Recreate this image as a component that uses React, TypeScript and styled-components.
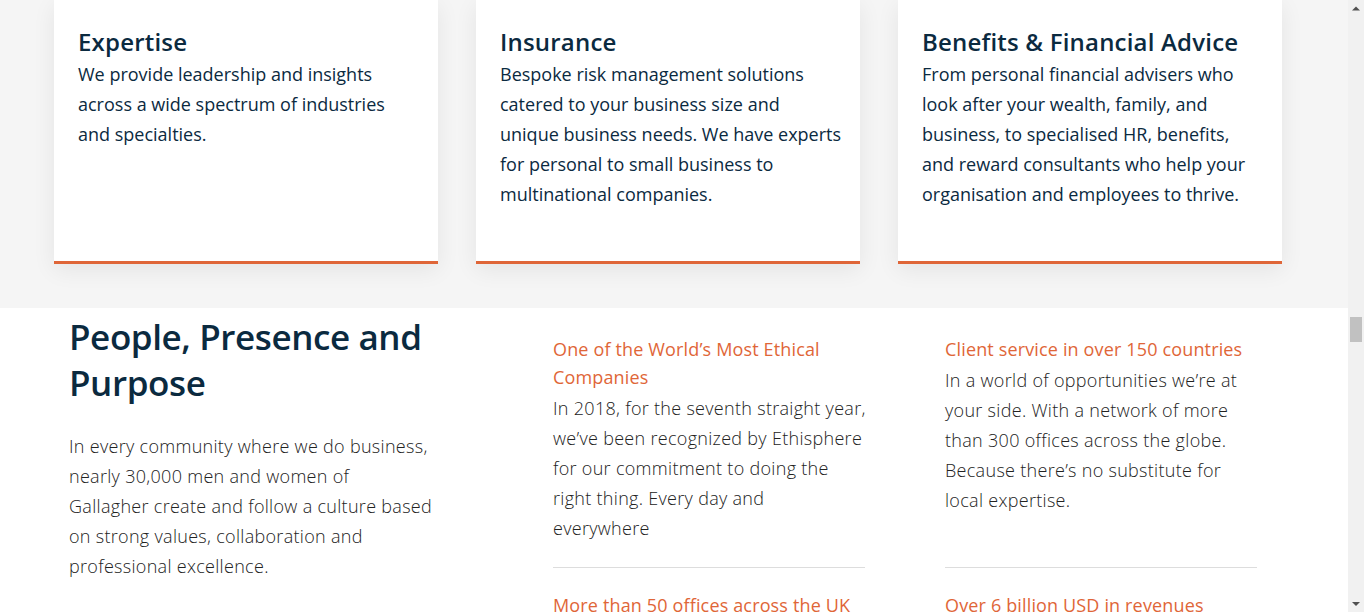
import React from 'react';
import styled, { createGlobalStyle } from 'styled-components';

const GlobalStyle = createGlobalStyle`
  html, body {
    margin: 0;
    padding: 0;
    overflow: hidden;
    background: #ffffff;
  }
  body {
    font-family: 'Open Sans', 'Liberation Sans', sans-serif;
  }
`;

const cards = [
  {
    title: 'Expertise',
    lines: ['We provide leadership and insights', 'across a wide spectrum of industries', 'and specialties.'],
  },
  {
    title: 'Insurance',
    lines: [
      'Bespoke risk management solutions',
      'catered to your business size and',
      'unique business needs. We have experts',
      'for personal to small business to',
      'multinational companies.',
    ],
  },
  {
    title: 'Benefits & Financial Advice',
    lines: [
      'From personal financial advisers who',
      'look after your wealth, family, and',
      'business, to specialised HR, benefits,',
      'and reward consultants who help your',
      'organisation and employees to thrive.',
    ],
  },
];

const stats = [
  {
    title: 'One of the World’s Most Ethical Companies',
    lines: [
      'In 2018, for the seventh straight year,',
      'we’ve been recognized by Ethisphere',
      'for our commitment to doing the',
      'right thing. Every day and',
      'everywhere',
    ],
  },
  {
    title: 'Client service in over 150 countries',
    lines: [
      'In a world of opportunities we’re at',
      'your side. With a network of more',
      'than 300 offices across the globe.',
      'Because there’s no substitute for',
      'local expertise.',
    ],
  },
  { title: 'More than 50 offices across the UK', lines: [] },
  { title: 'Over 6 billion USD in revenues', lines: [] },
];

const introLines = [
  'In every community where we do business,',
  'nearly 30,000 men and women of',
  'Gallagher create and follow a culture based',
  'on strong values, collaboration and',
  'professional excellence.',
];

function Lines({ lines }: { lines: string[] }) {
  return (
    <>
      {lines.map((l, i) => (
        <React.Fragment key={i}>
          {l}
          {i < lines.length - 1 && <br />}
        </React.Fragment>
      ))}
    </>
  );
}

export default function App() {
  return (
    <Viewport>
      <GlobalStyle />
      <Page>
        <CardsSection>
          <CardRow>
            {cards.map((c) => (
              <Card key={c.title}>
                <CardTitle>{c.title}</CardTitle>
                <CardText>
                  <Lines lines={c.lines} />
                </CardText>
              </Card>
            ))}
          </CardRow>
        </CardsSection>
        <AboutSection>
          <AboutGrid>
            <Intro>
              <Heading>People, Presence and Purpose</Heading>
              <IntroText>
                <Lines lines={introLines} />
              </IntroText>
            </Intro>
            {stats.map((s, i) => (
              <Stat key={s.title} $first={i < 2}>
                <StatTitle>{s.title}</StatTitle>
                {s.lines.length > 0 && (
                  <StatText>
                    <Lines lines={s.lines} />
                  </StatText>
                )}
              </Stat>
            ))}
          </AboutGrid>
        </AboutSection>
      </Page>
      <Scrollbar>
        <Arrow viewBox="0 0 16 16">
          <path d="M4 10.5 L8 6.5 L12 10.5 Z" fill="#505050" />
        </Arrow>
        <Track>
          <Thumb />
        </Track>
        <Arrow viewBox="0 0 16 16">
          <path d="M4 6 L8 10 L12 6 Z" fill="#505050" />
        </Arrow>
      </Scrollbar>
    </Viewport>
  );
}

const navy = '#0b2a3f';
const orange = '#df6638';

const Viewport = styled.div`
  display: flex;
  width: 1364px;
  height: 612px;
  overflow: hidden;
`;

const Page = styled.div`
  flex: 1;
  min-width: 0;
`;

const CardsSection = styled.section`
  background: #f5f5f5;
  height: 308px;
  padding: 0 66px 0 54px;
  box-sizing: border-box;
`;

const CardRow = styled.div`
  display: grid;
  grid-template-columns: repeat(3, 1fr);
  column-gap: 38px;
`;

const Card = styled.div`
  background: #ffffff;
  height: 264px;
  box-sizing: border-box;
  padding: 25px 12px 0 24px;
  border-bottom: 3px solid ${orange};
  box-shadow: 0 6px 22px rgba(0, 0, 0, 0.07);
`;

const CardTitle = styled.h3`
  margin: 0;
  font-size: 24px;
  line-height: 34px;
  font-weight: 600;
  color: ${navy};
  letter-spacing: 0.2px;
`;

const CardText = styled.p`
  margin: 0;
  font-size: 18px;
  line-height: 30px;
  font-weight: 400;
  color: ${navy};
  white-space: nowrap;
`;

const AboutSection = styled.section`
  padding: 8px 0 0 69px;
`;

const AboutGrid = styled.div`
  display: grid;
  grid-template-columns: 404px 312px 312px;
  column-gap: 80px;
`;

const Intro = styled.div`
  grid-row: span 2;
`;

const Heading = styled.h2`
  margin: -2px 0 25px;
  font-size: 35px;
  line-height: 46px;
  font-weight: 600;
  letter-spacing: -0.4px;
  color: ${navy};
`;

const IntroText = styled.p`
  margin: 0;
  font-size: 18px;
  line-height: 30px;
  font-weight: 300;
  letter-spacing: 0.3px;
  color: #222222;
`;

const Stat = styled.div<{ $first: boolean }>`
  padding: ${(p) => (p.$first ? '19px 0 24px' : '23px 0 0')};
  border-bottom: ${(p) => (p.$first ? '1px solid #dddddd' : 'none')};
`;

const StatTitle = styled.h4`
  margin: 0 0 2px;
  font-size: 18px;
  line-height: 28px;
  font-weight: 500;
  letter-spacing: 0.15px;
  color: ${orange};
`;

const StatText = styled.p`
  margin: 0;
  font-size: 18px;
  line-height: 30px;
  font-weight: 300;
  letter-spacing: 0.3px;
  color: #222222;
  white-space: nowrap;
`;

const Scrollbar = styled.div`
  width: 16px;
  background: #f1f1f1;
  display: flex;
  flex-direction: column;
`;

const Arrow = styled.svg`
  width: 16px;
  height: 16px;
  flex: none;
`;

const Track = styled.div`
  flex: 1;
  padding-top: 301px;
`;

const Thumb = styled.div`
  width: 12px;
  height: 25px;
  margin-left: 2px;
  background: #c1c1c1;
`;
